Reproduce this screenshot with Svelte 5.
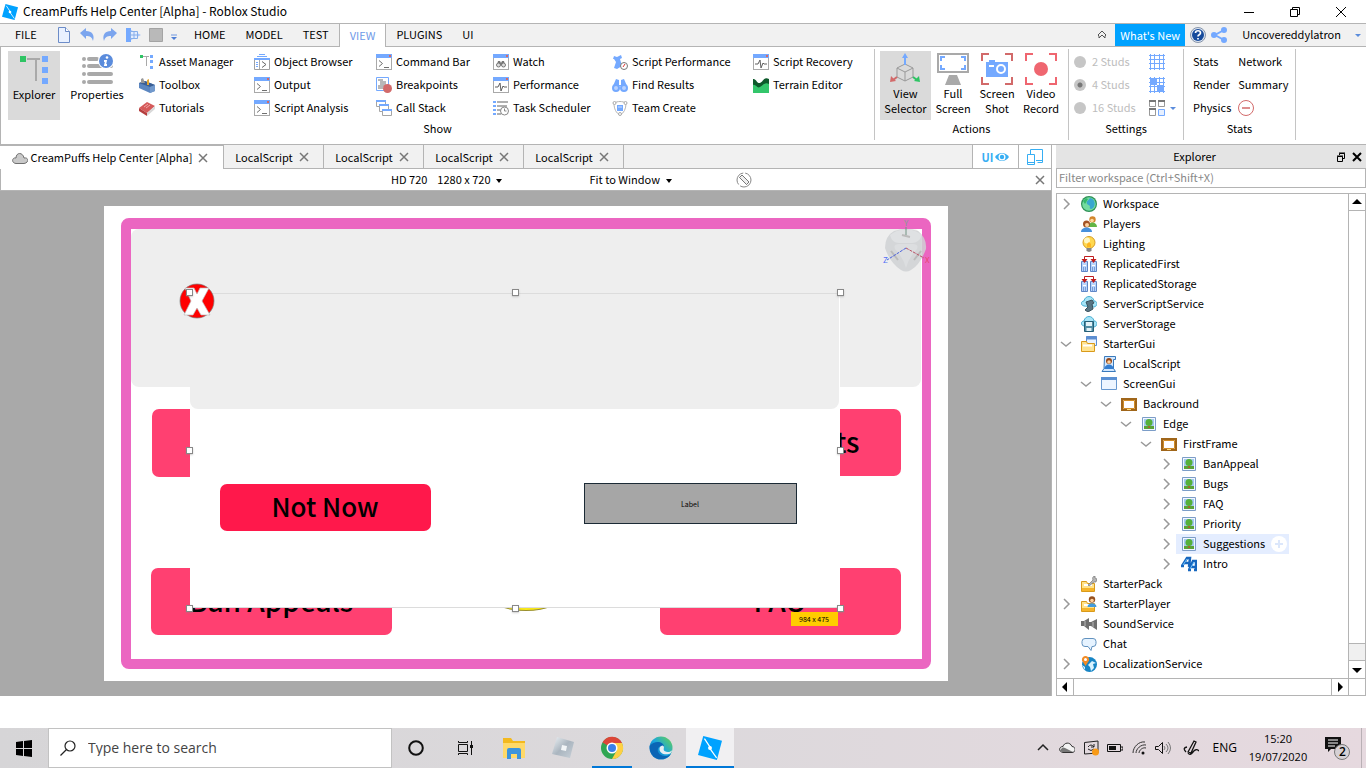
<script>
  const win = '<rect x=".5" y=".5" width="15" height="15" fill="#fff" stroke="#a9a9a9"/><path d="M0 0h16v4H0z" fill="#74a9ff"/><path d="M13 1h2v2h-2z" fill="#d26a6a"/>';
  const globe = '<circle cx="8" cy="8" r="8" fill="#2d8f55"/><circle cx="8" cy="8" r="6.800" fill="#74dca0"/>';
  const folder = '<path d="M.5 5.500h5l1 2h7v8H.5z" fill="#ffe28a" stroke="#d99a1b"/><path d="M1 12h12v3H1z" fill="#f6b52c"/><path d="M3 9h8" stroke="#fff" stroke-width="2"/>';
  const cloudDb = '<path d="M3 10C-1 9 0 5 3 5c1-6 9-6 10 0 4 0 4 5 0 6z" fill="#a6e4f7" stroke="#49aed2"/>';
  const server = '<path d="M.5 5.500h6v10h-6z" fill="#b9d4fb" stroke="#5f86c6"/><path d="M9.500 5.500h6v10h-6z" fill="#b9d4fb" stroke="#5f86c6"/><path d="M2 9.500h3M11 9.500h3" stroke="#fff"/><path d="M2 12h3M2 14h3M11 12h3M11 14h3" stroke="#3a6ab8" stroke-dasharray="1 1"/><path d="M3.500 4V.5h9V4" fill="none" stroke="#c01d1d"/><path d="M.5 3h6l-3 4zM9.500 3h6l-3 4z" fill="#c01d1d"/>';
  const frame = '<path d="M1 3h14v11H1z" fill="#fff" stroke="#a0661a" stroke-width="2"/><path d="M2.500 4.500h11v8h-11z" fill="none" stroke="#d18c25"/><path d="M6 13.500h4" stroke="#ffe07a"/>';
  const logo = '<path d="M3.500 0 16 3.200 12.600 16 0 12.700z" fill="#00a2ff"/><path d="m4.300 1.800 4.300 6.400M7.400 7.600l5 7" stroke="#fff" stroke-width=".8"/><circle cx="8" cy="8" r="1.300" fill="#fff"/>';

  const art = {
    logo,
    file: '<path d="M2.500.5h7l4 4v11h-11z" fill="#e9f1ff" stroke="#6c8cc8"/><path d="M9.500.5v4h4" fill="#fff" stroke="#6c8cc8"/>',
    undo: '<path d="M1 6 7 1v3c6 0 9 4 7 10-1-4-3-5-7-5v3z" fill="#7ba5ee"/>',
    redo: '<path d="M15 6 9 1v3C3 4 0 8 2 14c1-4 3-5 7-5v3z" fill="#7ba5ee"/>',
    play: '<path d="M1 1h5v14H1z" fill="#74a9ff"/><path d="M6 3 16 8 6 13z" fill="#a8c6fa"/><path d="M5.500 4.500h7v7h-7zM9 4.500v7M5.500 8h7" fill="#e2ecff" stroke="#86aeea"/>',
    stop: '<path d="M1.500 1.500h13v13h-13z" fill="#b9b9b9" stroke="#a4a4a4"/>',
    more: '<path d="M5 8h6" stroke="#7098e0"/><path d="M5 10h6l-3 3z" fill="#4f7fd6"/>',
    explorer: '<path d="M1 1h6v6H1zM23 1h6v6h-6zM23 12h6v6h-6zM23 23h6v6h-6z" fill="#74a9ff"/><path d="M1 1h6v6H1z" fill="#2ec464"/><path d="M8 4h13M17 4v22" stroke="#a9a9a9" stroke-width="2"/>',
    props: '<path d="M8 5h8M8 12h22M8 20h22M8 28h22" stroke="#a9a9a9" stroke-width="4" stroke-linecap="round"/><g fill="#a9a9a9"><circle cx="3" cy="5" r="2"/><circle cx="3" cy="12" r="2"/><circle cx="3" cy="20" r="2"/><circle cx="3" cy="28" r="2"/></g><circle cx="25" cy="7" r="8" fill="#fff"/><circle cx="25" cy="7" r="7" fill="#5b8cdc"/><circle cx="26" cy="3.500" r="1.300" fill="#fff"/><path d="M23 7h2l-1 4h2" fill="none" stroke="#fff" stroke-width="1.800"/>',
    asset: '<path d="M1 1h3v3H1z" fill="#2ec464"/><path d="M11 1h3v3h-3zM11 6h3v3h-3zM11 12h3v3h-3z" fill="#74a9ff"/><path d="M4 2.500h6M7.500 2v10" stroke="#a9a9a9"/>',
    toolbox: '<path d="m0 6 6-2 10 4v6l-5 2L0 11z" fill="#5b86c0"/><path d="m0 6 6-2 10 4-5 2z" fill="#3b5f94"/><path d="M2 6V2l2-1 2 5" fill="#999"/><path d="m8 3 2-1v6H8z" fill="#e6a831"/><path d="M11 10v6l5-2V8z" fill="#7299cc"/>',
    book: '<path d="m0 8 8-6 8 4-8 7z" fill="#d55a5a"/><path d="m0 8 8 5v3l-8-5z" fill="#b53e3e"/><path d="m8 13 8-7v3l-8 7z" fill="#d8d8d8"/><path d="m5 7 4-3M7 8l4-3" stroke="#f1a6a6"/>',
    browser: '<path d="M5 .5h6M3 2.500h10" stroke="#74a9ff"/><path d="M.5 5.500h15v10H.5z" fill="#fff" stroke="#a0a0a0"/><path d="M0 5h16" stroke="#74a9ff" stroke-width="2"/><path d="M2 8.500h2M2 10.500h2M2 12.500h2" stroke="#74a9ff"/><path d="M5.500 6v9" stroke="#aaa"/><path d="m8 7.500 4 3-4 3" fill="none" stroke="#666"/>',
    term: win + '<path d="m3 6.500 3.500 3L3 12.500M8 13.500h5" fill="none" stroke="#707070"/>',
    breakp: '<path d="M.5.5h12v13H.5z" fill="#fff" stroke="#74a9ff"/><path d="M2 3h5M4 5h6M4 7h6M2 9h7M2 11h5" stroke="#707070"/><circle cx="11.500" cy="11.500" r="4.500" fill="#d26a6a"/>',
    stack: '<path d="M.5.500h9v6h-9z" fill="#fff" stroke="#a5a5a5"/><path d="M0 1h10" stroke="#74a9ff" stroke-width="2"/><path d="M3.500 5.500h9v6h-9z" fill="#fff" stroke="#a5a5a5"/><path d="M3 5h10" stroke="#74a9ff" stroke-width="2"/><path d="M6.500 9.500h9v6h-9z" fill="#fff" stroke="#a5a5a5"/><path d="M6 10h10" stroke="#74a9ff" stroke-width="2"/>',
    watch: win + '<path d="m4 11 1-4h2l1 2 1-2h2l1 4" fill="#777"/><circle cx="5.500" cy="11" r="2" fill="#ddd" stroke="#777"/><circle cx="10.500" cy="11" r="2" fill="#ddd" stroke="#777"/>',
    perf: win + '<path d="M2 10h3l2-4 1 8 2-5 1 1h3" fill="none" stroke="#606060"/>',
    task: '<path d="M0 2h3M0 6h3M0 10h3M0 14h3" stroke="#74a9ff" stroke-width="2"/><path d="M4 2h11M4 6h10M4 10h5M4 14h4" stroke="#b0b0b0" stroke-width="2"/><circle cx="11.500" cy="11" r="4" fill="#fff" stroke="#888"/><path d="M11.500 8.500V11h2" fill="none" stroke="#888"/>',
    scriptperf: '<path d="m1 5 1-3 3 1 4-2 1 3-2 1 2 7-5 3-3-1 1-3 1-3-2-3z" fill="#74a9ff"/><circle cx="12" cy="12" r="3.500" fill="#fff" stroke="#777"/><path d="m11 13 2-3" stroke="#d33"/>',
    find: '<path d="M1 9 4 2l3 1v5h2V3l3-1 3 7z" fill="#74a9ff"/><circle cx="4" cy="11" r="3" fill="#b9d2ff" stroke="#74a9ff" stroke-width="2"/><circle cx="12" cy="11" r="3" fill="#b9d2ff" stroke="#74a9ff" stroke-width="2"/>',
    team: '<path d="M2 3c0 6 2 10 6 12 4-2 6-6 6-12-4-2-8-2-12 0z" fill="none" stroke="#b5b5b5"/><path d="M5 5h6v6H5z" fill="#74a9ff"/><path d="M6 7h4" stroke="#cfe0ff"/><g fill="#fff" stroke="#aaa"><circle cx="2.500" cy="3" r="1.500"/><circle cx="13.500" cy="3" r="1.500"/><circle cx="8" cy="14" r="1.500"/></g>',
    terrain: '<path d="M0 2c3-1 4 5 7 4s4-7 9-4v13H0z" fill="#0d5a2b"/><path d="M0 8c3-1 4 4 7 2s5-5 9-3v9H0z" fill="#33c66b"/>',
    view3d: '<path d="m15 11 8 4v9l-8 4-8-4v-9zM7 15l8 4 8-4M15 19v9" fill="#dadada" stroke="#999"/><path d="M15 12V4" stroke="#74a9ff" stroke-width="2"/><path d="m15 0 3 5h-6z" fill="#74a9ff"/><path d="m7 24-4 3" stroke="#d26a6a" stroke-width="2"/><path d="m0 29 1-6 5 5z" fill="#d26a6a"/><path d="m23 24 4 3" stroke="#2ec464" stroke-width="2"/><path d="m30 29-1-6-5 5z" fill="#2ec464"/>',
    screen: '<path d="M1 1h30v18H1z" fill="#fff" stroke="#a9a9a9" stroke-width="2"/><path d="M12 22h8l4 10H8z" fill="#a9a9a9"/><path d="M4 8V4h4M24 4h4v4M4 12v4h4M24 16h4v-4" fill="none" stroke="#74a9ff" stroke-width="2"/>',
    shot: '<path d="M1 8V1h7M24 1h7v7M1 24v7h7M24 31h7v-7" fill="none" stroke="#d26a6a" stroke-width="2"/><path d="M5 9h3V7h6v2h13v15H5z" fill="#74a9ff"/><circle cx="20" cy="16" r="4" fill="none" stroke="#fff" stroke-width="2"/><path d="M8 13h5" stroke="#fff" stroke-width="2"/>',
    record: '<path d="M1 8V1h7M24 1h7v7M1 24v7h7M24 31h7v-7" fill="none" stroke="#ef6670" stroke-width="2"/><circle cx="16" cy="16" r="7" fill="#ef6670"/>',
    grid: '<path d="M0 1.500h16M0 5.500h16M0 9.500h16M0 14.500h16M1.500 0v16M5.500 0v16M10.500 0v16M14.500 0v16" stroke="#74a9ff"/>',
    grid2: '<path d="M1 1h7v7H1zM8 8h7v7H8z" fill="#74a9ff"/><path d="M0 1.500h16M0 5.500h16M0 9.500h16M0 14.500h16M1.500 0v16M5.500 0v16M10.500 0v16M14.500 0v16" stroke="#74a9ff"/>',
    panes: '<path d="M.5 1.500h6v5h-6zM9.500 1.500h6v5h-6zM.5 9.500h6v6h-6z" fill="#fff" stroke="#999"/><path d="M0 1h7M9 1h7M0 9h7" stroke="#777" stroke-width="2"/><path d="M9.500 9.500h6v6h-6z" fill="#e7f0ff" stroke="#74a9ff"/>',
    minus: '<circle cx="8" cy="8" r="7.500" fill="#fff" stroke="#d26a6a"/><path d="M4 8h8" stroke="#d26a6a" stroke-width="1.500"/>',
    help: '<circle cx="8" cy="8" r="7.500" fill="#dce5f2" stroke="#8694aa"/><circle cx="8" cy="8" r="6" fill="#174b9c"/><path d="M5.500 6c0-3 5-3 5 0 0 2-2.500 1.500-2.500 3.500M8 11v1.500" fill="none" stroke="#fff" stroke-width="1.700"/>',
    share: '<path d="m13 3-9 5 9 5" fill="none" stroke="#74a9ff" stroke-width="2"/><g fill="#74a9ff"><circle cx="13" cy="3" r="3"/><circle cx="3" cy="8" r="3"/><circle cx="13" cy="13" r="3"/></g>',
    cloud: '<path d="M4 13.500C-1 13 0 7 4 8c0-6 7-6 8 0 5-1 5 5 0 5.500z" fill="#c9c9c9" stroke="#707070"/>',
    eye: '<path d="M0 8c4-6 12-6 16 0-4 6-12 6-16 0z" fill="#36aef3"/><circle cx="8" cy="8" r="4" fill="#fff"/><circle cx="8" cy="8" r="2.500" fill="#36aef3"/>',
    devices: '<path d="M3.500 5V.5h12v13h-5M.5 5.500h7v10h-7z" fill="none" stroke="#36aef3"/><path d="M9 11.500h6M1 13.500h6" stroke="#36aef3"/>',
    rotate: '<circle cx="8" cy="8" r="7" fill="#fff" stroke="#888" stroke-dasharray="15 2"/><path d="m3.500 5.500 2.500-2.500 7 7-2.500 2.500zM3.500 5.500l7 7" fill="#eee" stroke="#777"/>',
    world: globe + '<path d="M9 2c5 1 6 7 3 10-2 2-4 1-3-2L6 8c-1-3 1-3 3-6z" fill="#39a7cf"/><path d="m2 5 3-3 2 1-3 5z" fill="#35b86a"/>',
    players: '<circle cx="11.500" cy="3.500" r="3.200" fill="#d3862d"/><path d="M7 11c0-6 9-6 9 0z" fill="#62b545"/><circle cx="11" cy="4.500" r="1.800" fill="#ffd9a0"/><circle cx="5.500" cy="8" r="3.500" fill="#a25325"/><circle cx="6" cy="9" r="2" fill="#ffd2a0"/><path d="M0 16c0-6 11-6 11 0z" fill="#4690dc"/>',
    bulb: '<circle cx="8" cy="6.500" r="6" fill="#ffd84f" stroke="#d79d25"/><circle cx="6" cy="4.500" r="3" fill="#fff6c3"/><path d="M6 8 8 6l2 2v3H6z" fill="#ffb51f"/><path d="M5.500 12h5v3l-2.500 1-2.500-1z" fill="#858585"/>',
    replicated: server,
    sss: cloudDb + '<path d="m5 6 6-2 2 3-2 1 1 5-5 3-3-2 3-3z" fill="#587583" stroke="#39515d"/>',
    storage: cloudDb + '<path d="M3.500 5.500h9v10h-9z" fill="#508da4" stroke="#255f77"/><path d="M5 6h6v4H5zM5.500 12h5v3h-5z" fill="#e3f2f7"/>',
    startergui: '<path d="M5.500.5h10v9h-10z" fill="#eaf3ff" stroke="#5c8ed1"/><path d="M5 2h11" stroke="#5c8ed1" stroke-width="3"/><path d="M.5 5.500h5l1 2h7v8H.5z" fill="#ffe391" stroke="#d99a1b"/><path d="M2 9.500h9" stroke="#fff" stroke-width="2"/>',
    local: '<path d="M3.500.5h11v3h-2v9l2 3H1l2-3z" fill="#d1e7ff" stroke="#3979bb"/><circle cx="8" cy="5" r="3" fill="#944819"/><circle cx="8" cy="6" r="1.800" fill="#ffd2a0"/><path d="M3 13c1-6 9-6 10 0z" fill="#347ed0"/>',
    screengui: '<path d="M.5 1.500h15v12H.5z" fill="#edf5ff" stroke="#6898cf"/><path d="M0 2.500h16" stroke="#5a90d3" stroke-width="3"/>',
    frame,
    image: '<path d="M1.500 1.500h13v13h-13z" fill="#f2f8ff" stroke="#7c9dc8"/><path d="M3 3h10v10H3z" fill="#a5c9f0"/><path d="M3 10h10v3H3z" fill="#5ba338"/><circle cx="8" cy="6.500" r="3.500" fill="#55b03a"/><path d="M7 10h2v2H7z" fill="#a06a2c"/>',
    intro: '<path d="m1 10 5-8h3l-1 9M3 7h5M8 14l4-9h3v10M9 11h6M0 10h3M7 14h3M13 14h3" fill="none" stroke="#1767bf" stroke-width="2.500"/><path d="m2 9 4-6M9 13l4-7" stroke="#6cc3ff"/>',
    pack: folder + '<path d="m7 9 5-5c-1-2 0-4 2-4v2l2 1-1 3h-2L8 10z" fill="#b6b6b6" stroke="#777" stroke-width=".7"/>',
    player: folder + '<circle cx="11" cy="3.500" r="3.200" fill="#96501f"/><circle cx="11" cy="4.500" r="1.800" fill="#ffd2a0"/><path d="M6.500 11c0-5 9-5 9 0z" fill="#449bdc"/>',
    sound: '<path d="M0 5h3l5-3v12l-5-4H0zM8 6h2l6-3v11l-6-4H8z" fill="#707070"/><path d="M4 5v5M12 6v5" stroke="#bbb"/>',
    chat: '<path d="M4 2.500h8q3 0 3 3v2q0 3-3 3h-1l-1 4-3-4H4q-3 0-3-3v-2q0-3 3-3z" fill="#e6f3ff" stroke="#6292bf"/>',
    local2: '<circle cx="8.500" cy="8.500" r="7.500" fill="#1785c5"/><path d="m7 9 4-4 4 2-3 1 1 4-3 3-1-4zM1 9l3 2v3z" fill="#d9f3ff"/><path d="M4.500 10 1 4.500c-1-6 8-6 7 0z" fill="#f28b25"/><circle cx="4.500" cy="3.500" r="1.500" fill="#fff"/>',
    start: '<path d="m0 2 7-1v7H0zM8 1l8-1v8H8zM0 9h7v7l-7-1zM8 9h8v8l-8-1z" fill="#000"/>',
    search: '<circle cx="10" cy="6" r="5" fill="none" stroke="#222" stroke-width="1.200"/><path d="m6.500 9.500-6 6" stroke="#222" stroke-width="1.200"/>',
    cortana: '<circle cx="8" cy="8" r="6.800" fill="none" stroke="#111" stroke-width="2"/>',
    tasks: '<path d="M1.500 4.500h9v7h-9zM1.500 1v1.500h9V1M1.500 15v-1.500h9V15M14.500 1v14" fill="none" stroke="#111"/><path d="M13 5h3v3h-3z" fill="#111"/>',
    files: '<path d="M1 2h8l2 3h12v17H1z" fill="#f3b91e"/><path d="M1 7h22v15H1z" fill="#ffd968"/><path d="M5 14q0-2 2-2h10q2 0 2 2v9h-4v-5H9v5H5z" fill="#3d94dc"/>',
    roblox: '<defs><linearGradient id="silver" x2="1" y2="1"><stop stop-color="#eef3f6"/><stop offset=".5" stop-color="#aab5bf"/><stop offset="1" stop-color="#c7d0d8"/></linearGradient></defs><path d="m6 1 17 5-4 16-18-4z" fill="url(#silver)"/><path d="m11 9 5 1-1 5-5-1z" fill="#f2f5f7"/>',
    chrome: '<circle cx="12" cy="12" r="11" fill="#30a653"/><path d="M12 12 2.500 6.500A11 11 0 0 1 22 7H12z" fill="#dc4638"/><path d="M12 7h10a11 11 0 0 1-10 16l5-9z" fill="#ffd043"/><circle cx="12" cy="12" r="5.500" fill="#fff"/><circle cx="12" cy="12" r="4" fill="#3a80e8"/>',
    edge: '<defs><linearGradient id="sea" x1="0" y1="1" x2="1" y2="0"><stop stop-color="#095caf"/><stop offset=".5" stop-color="#1aa6df"/><stop offset="1" stop-color="#6bd447"/></linearGradient></defs><circle cx="12" cy="12" r="11.500" fill="url(#sea)"/><path d="M.7 10C5 4 15 5 15 11c-6-3-9 5-3 8 3 2 7 1 10-1-5 8-20 7-21.300-6z" fill="#0b65b5"/><path d="M13.500 9.500c3 1 0 4 2 5.500 3 2 6 1 8-1-1 2-2 4-4 4-5 1-9-1-9-5 0-2 1-3 3-3.500z" fill="#e6edf2"/>',
    tchev: '<path d="m3 10 5-5 5 5" fill="none" stroke="#222" stroke-width="1.500"/>',
    tcloud: '<path d="M4 12.500c-5-1-4-6 0-6 1-4 7-5 9 0 4 0 4 6 0 6z" fill="#f3f3f3" stroke="#333"/><path d="M1 11q2-5 5-3l8 4H3z" fill="#777"/>',
    sync: '<path d="M1.500 2.500 15 1v12L1.500 14z" fill="none" stroke="#222"/><path d="M5 7q3-4 6 0M11 4v3H8M11 9q-3 3-6 0" fill="none" stroke="#222"/><circle cx="12.500" cy="12" r="3.500" fill="#f89a16"/>',
    battery: '<path d="M.5 4.500h13v7H.5zM14 7h2v3h-2" fill="none" stroke="#111"/><path d="M2 6h7v4H2z" fill="#111"/>',
    wifi: '<path d="M2 13C2 7 8 1 14 2M5 13c0-4 5-9 10-8M8 13c0-3 4-6 7-5" fill="none" stroke="#333"/><circle cx="12" cy="13" r="1.500" fill="#111"/>',
    volume: '<path d="M.5 6.500h3l4-4v11l-4-4h-3z" fill="none" stroke="#111"/><path d="M9 6q2 2 0 4M11 4q4 4 0 8M13 2q5 6 0 12" fill="none" stroke="#777"/>',
    pen: '<path d="m5 12 6-11 2 1-5 11zM3 12q-4-4 1-5M5 13q2 3 5-1 3-4 6-1" fill="none" stroke="#111" stroke-width="1.300"/>',
    notice: '<path d="M0 0h16v12H6l-3 3v-3H0z" fill="#111"/><path d="M3 3h10M3 6h10M3 9h7" stroke="#fff"/><circle cx="17" cy="15" r="7.500" fill="#d6d1d5" stroke="#777"/>',
    right: '<path d="m6 3 5 5-5 5" fill="none" stroke="#999" stroke-width="1.500"/>',
    down: '<path d="m3 6 5 4 5-4" fill="none" stroke="#999" stroke-width="1.500"/>',
    close: '<path d="m4 4 8 8M12 4l-8 8" stroke="#777" stroke-width="1.500"/>',
    wmin: '<path d="M3 8.500h10" stroke="#000"/>',
    wmax: '<path d="M3.500 5.500h7v7h-7zM5.500 5V3.500h7v7H11" fill="none" stroke="#000"/>',
    wclose: '<path d="m3 3 10 10M13 3 3 13" stroke="#000"/>',
    dock: '<path d="M4.500 7.500h5v5h-5zM6.500 6V4.500h5v5H10M4 7h6M6 4h6" fill="none" stroke="#000"/>',
    pclose: '<path d="m4 4 8 8M12 4l-8 8" stroke="#000" stroke-width="2"/>',
    collapse: '<path d="m4 8 4-4 4 4-1 1v2l-3-3-3 3V9z" fill="none" stroke="#555"/>',
    aup: '<path d="M3 10h10L8 5z"/>',
    adown: '<path d="M3 6h10l-5 5z"/>',
    aleft: '<path d="M10 3v10L5 8z"/>',
    aright: '<path d="M6 3v10l5-5z"/>',
    tri: '<path d="M5 7h6l-3 4z"/>',
    tri2: '<path d="M5 7h6l-3 3z" fill="#5b8cdc"/>',
    plus: '<circle cx="8" cy="8" r="8" fill="#fff"/><path d="M8 4v8M4 8h8" stroke="#dce7fb" stroke-width="2"/>',
  };

  const tools = [
    [['asset', 'Asset Manager'], ['toolbox', 'Toolbox'], ['book', 'Tutorials']],
    [['browser', 'Object Browser'], ['term', 'Output'], ['term', 'Script Analysis']],
    [['term', 'Command Bar'], ['breakp', 'Breakpoints'], ['stack', 'Call Stack']],
    [['watch', 'Watch'], ['perf', 'Performance'], ['task', 'Task Scheduler']],
    [['scriptperf', 'Script Performance'], ['find', 'Find Results'], ['team', 'Team Create']],
    [['perf', 'Script Recovery'], ['terrain', 'Terrain Editor']],
  ];
  const actions = [['view3d', 'View', 'Selector'], ['screen', 'Full', 'Screen'], ['shot', 'Screen', 'Shot'], ['record', 'Video', 'Record']];
  const tree = [
    [0, 'right', 'world', 'Workspace'], [0, '', 'players', 'Players'], [0, '', 'bulb', 'Lighting'],
    [0, '', 'replicated', 'ReplicatedFirst'], [0, '', 'replicated', 'ReplicatedStorage'],
    [0, '', 'sss', 'ServerScriptService'], [0, '', 'storage', 'ServerStorage'], [0, 'down', 'startergui', 'StarterGui'],
    [1, '', 'local', 'LocalScript'], [1, 'down', 'screengui', 'ScreenGui'], [2, 'down', 'frame', 'Backround'],
    [3, 'down', 'image', 'Edge'], [4, 'down', 'frame', 'FirstFrame'], [5, 'right', 'image', 'BanAppeal'],
    [5, 'right', 'image', 'Bugs'], [5, 'right', 'image', 'FAQ'], [5, 'right', 'image', 'Priority'],
    [5, 'right', 'image', 'Suggestions'], [5, 'right', 'intro', 'Intro'], [0, '', 'pack', 'StarterPack'],
    [0, 'right', 'player', 'StarterPlayer'], [0, '', 'sound', 'SoundService'], [0, '', 'chat', 'Chat'],
    [0, 'right', 'local2', 'LocalizationService'],
  ];
  const studs = ['2 Studs', '4 Studs', '16 Studs'];
  const apps = [['cortana', 16], ['tasks', 16], ['files', 24], ['roblox', 24], ['chrome', 24], ['edge', 24], ['logo', 24]];
  const appNames = ['Cortana', 'Task View', 'File Explorer', 'Roblox', 'Chrome', 'Edge', 'Roblox Studio'];
  const tray = ['tchev', 'tcloud', 'sync', 'battery', 'wifi', 'volume'];
  const handles = ['top left', 'top mid', 'top right', 'center left', 'center right', 'bottom left', 'bottom mid', 'bottom right'];
  let filter = $state('');
  let query = $state('');
  let stud = $state('4 Studs');
</script>

{#snippet icon(name, size = 16, box = size)}
  <svg class="icon" width={size} height={size} viewBox="0 0 {box} {box}" aria-hidden="true">{@html art[name]}</svg>
{/snippet}

<div class="page">
  <header class="titlebar">
    {@render icon('logo')}
    <h1>CreamPuffs Help Center [Alpha] - Roblox Studio</h1>
    <div class="winbtns">
      <button aria-label="Minimize">{@render icon('wmin')}</button>
      <button aria-label="Restore">{@render icon('wmax')}</button>
      <button aria-label="Close">{@render icon('wclose')}</button>
    </div>
  </header>

  <nav class="menubar">
    <button class="filebtn">FILE</button>
    <div class="quick">
      {#each ['file', 'undo', 'redo', 'play', 'stop'] as q}
        <button aria-label={q}>{@render icon(q)}</button>
      {/each}
      <button class="narrow" aria-label="more">{@render icon('more')}</button>
    </div>
    <button class="menu">HOME</button>
    <button class="menu">MODEL</button>
    <button class="menu">TEST</button>
    <button class="menu current">VIEW</button>
    <button class="menu">PLUGINS</button>
    <button class="menu">UI</button>
    <div class="account">
      <button aria-label="Collapse ribbon">{@render icon('collapse')}</button>
      <button class="news">What's New</button>
      <button aria-label="Help">{@render icon('help')}</button>
      <button aria-label="Share">{@render icon('share')}</button>
      <button class="user"><span class="text">Uncovereddylatron</span>{@render icon('tri2')}</button>
    </div>
  </nav>

  <section class="ribbon">
    <div class="group show">
      <div class="body">
        <button class="big on">{@render icon('explorer', 30)}<span>Explorer</span></button>
        <button class="big wide">{@render icon('props', 32)}<span>Properties</span></button>
        <div class="tools">
          {#each tools as col}
            <div class="col">
              {#each col as [ic, label]}
                <button class="tool">{@render icon(ic)}<span class="text">{label}</span></button>
              {/each}
            </div>
          {/each}
        </div>
      </div>
      <div class="caption">Show</div>
    </div>
    <div class="group actions">
      <div class="body">
        {#each actions as [ic, a, b], i}
          <button class="big act" class:on={i === 0}>{@render icon(ic, 32)}<span>{a}<br />{b}</span></button>
        {/each}
      </div>
      <div class="caption">Actions</div>
    </div>
    <div class="group settings">
      <div class="body">
        <div class="col">
          {#each studs as s}
            <label class="tool stud"><input type="radio" name="studs" value={s} bind:group={stud} /><span class="text">{s}</span></label>
          {/each}
        </div>
        <div class="col">
          <button class="tool" aria-label="Show grid">{@render icon('grid')}</button>
          <button class="tool" aria-label="Grid material">{@render icon('grid2')}</button>
          <button class="tool tight" aria-label="Window layout">{@render icon('panes')}{@render icon('tri2')}</button>
        </div>
      </div>
      <div class="caption">Settings</div>
    </div>
    <div class="group stats">
      <div class="body">
        <div class="col">
          {#each ['Stats', 'Render', 'Physics'] as s}<button class="tool"><span class="text">{s}</span></button>{/each}
        </div>
        <div class="col">
          {#each ['Network', 'Summary'] as s}<button class="tool"><span class="text">{s}</span></button>{/each}
          <button class="tool" aria-label="Clear stats">{@render icon('minus')}</button>
        </div>
      </div>
      <div class="caption">Stats</div>
    </div>
  </section>

  <div class="work">
    <main class="editor">
      <div class="tabs">
        <div class="tab first">{@render icon('cloud')}<span class="text">CreamPuffs Help Center [Alpha]</span><button aria-label="Close tab">{@render icon('close')}</button></div>
        {#each [1, 2, 3, 4] as n}
          <div class="tab"><span>LocalScript</span><button aria-label="Close script {n}">{@render icon('close')}</button></div>
        {/each}
        <div class="tabtools">
          <button class="uib">UI {@render icon('eye', 14, 16)}</button>
          <button aria-label="Device emulator">{@render icon('devices')}</button>
        </div>
      </div>
      <div class="device">
        <span class="text">HD 720</span>
        <button><span class="text">1280 x 720</span>{@render icon('tri')}</button>
        <button class="fit"><span class="text">Fit to Window</span>{@render icon('tri')}</button>
        <button class="rot" aria-label="Rotate device">{@render icon('rotate')}</button>
        <button class="shut" aria-label="Close emulator">{@render icon('close')}</button>
      </div>
      <div class="viewport">
        <div class="stage">
          <div class="edge"></div>
          <div class="banner"></div>
          <div class="pink p1"></div>
          <div class="pink p2"><span>ts</span></div>
          <div class="pink p3">Ban Appeals</div>
          <div class="pink p4">FAQ</div>
          <div class="coin"></div>
          <div class="dialog">
            <div class="head"></div>
            <button class="notnow">Not Now</button>
            <div class="label">Label</div>
          </div>
          <svg class="redx" width="36" height="36" viewBox="0 0 36 36" aria-hidden="true"><circle cx="18" cy="18" r="17" fill="#f00" stroke="#777" stroke-width=".7"/><path d="M6 5h9l3 6 3-6h9l-7 13 8 14h-9l-4-7-4 7H5l7-14z" fill="#fff" stroke="#bbb" stroke-width=".7"/></svg>
          <div class="selection">
            {#each handles as h}<i class="handle {h}"></i>{/each}
            <span class="size">984 x 475</span>
          </div>
          <svg class="cube" width="50" height="54" viewBox="0 0 50 54" aria-hidden="true">
            <path d="M13 10Q25 6 37 10q9 7 8 18-6 16-15 21-5 3-10 0Q9 42 4 27q0-12 9-17z" fill="#cfd1d4" opacity=".85"/>
            <path d="M9 14q8-6 16-5 8-1 16 5-3 8-10 8H18q-7 0-9-8z" fill="#dfe1e3"/>
            <path d="M18 23h14q6 0 4 5-8 8-11 19-3-11-11-19-2-5 4-5z" fill="#dcdee0"/>
            <path d="m10 30 7 9M40 30l-7 9M21 14l8 2" stroke="#bbb" stroke-width="2"/>
            <path d="M25 6v8" stroke="#739483"/><path d="M25 27 6 39" stroke="#4b62dd" stroke-dasharray="3 1"/><path d="m25 27 18 10" stroke="#bb5266" stroke-dasharray="3 1"/>
            <text x="23" y="5" fill="#879b91">Y</text><text x="2" y="42" fill="#5270f5">Z</text><text x="44" y="42" fill="#e84770">X</text>
          </svg>
        </div>
      </div>
    </main>

    <aside class="explorer">
      <div class="phead"><h2 class="text">Explorer</h2><button aria-label="Undock">{@render icon('dock')}</button><button aria-label="Close panel">{@render icon('pclose')}</button></div>
      <input class="filter" aria-label="Filter workspace" placeholder="Filter workspace (Ctrl+Shift+X)" bind:value={filter} />
      <div class="treebox">
        <div class="treemain">
          <ul>
            {#each tree as [depth, arrow, ic, name]}
              <li style="padding-left: {depth * 20 + 1}px">
                <span class="chev">{#if arrow}{@render icon(arrow)}{/if}</span>
                <span class="node" class:hover={name === 'Suggestions'}>{@render icon(ic)}<span class="text">{name}</span>{#if name === 'Suggestions'}{@render icon('plus')}{/if}</span>
              </li>
            {/each}
          </ul>
          <div class="vbar">
            <button aria-label="Scroll up">{@render icon('aup')}</button>
            <span></span>
            <i></i>
            <button aria-label="Scroll down">{@render icon('adown')}</button>
          </div>
        </div>
        <div class="hbar">
          <button aria-label="Scroll left">{@render icon('aleft')}</button><span></span><button aria-label="Scroll right">{@render icon('aright')}</button><i></i>
        </div>
      </div>
    </aside>
  </div>

  <footer class="taskbar">
    <button class="start" aria-label="Start">{@render icon('start', 17)}</button>
    <label class="search">{@render icon('search')}<input aria-label="Search" placeholder="Type here to search" bind:value={query} /></label>
    <div class="apps">
      {#each apps as [ic, size], i}
        <button class:running={i === 4 || i === 6} class:active={i === 6} aria-label={appNames[i]}>{@render icon(ic, size, ic === 'logo' ? 16 : size)}</button>
      {/each}
    </div>
    <div class="tray">
      {#each tray as t}<span class="ti">{@render icon(t)}</span>{/each}
      <span class="ti pen">{@render icon('pen')}</span>
      <span class="lang">ENG</span>
      <span class="clock">15:20<br />19/07/2020</span>
      <button class="note" aria-label="Notifications">{@render icon('notice', 26)}<b>2</b></button>
    </div>
  </footer>
</div>

<style>
  :global(body) { margin: 0; background: #fff; }
  .page { min-height: 100vh; display: flex; flex-direction: column; font: 11px/16px "Noto Sans CJK SC", "Open Sans", sans-serif; color: #000; }
  .page * { box-sizing: border-box; }
  button { font: inherit; color: inherit; background: none; border: 0; padding: 0; margin: 0; display: flex; align-items: center; white-space: nowrap; }
  input { font: inherit; margin: 0; }
  .icon { flex: none; display: block; }
  .text { padding-bottom: 2px; }
  h1, h2 { margin: 0; font-size: inherit; font-weight: 400; }

  .titlebar { height: 23px; display: flex; align-items: center; padding-left: 2px; gap: 5px; font-size: 12px; }
  .titlebar h1 { padding-bottom: 2px; }
  .winbtns { margin-left: auto; margin-right: 2px; display: flex; }
  .winbtns button { width: 46px; justify-content: center; }

  .menubar { height: 24px; display: flex; background: #f1f1f1; border: 1px solid #b4b4b4; border-left: 0; border-right: 0; }
  .filebtn { padding: 0 0 2px 15px; width: 56px; }
  .quick { display: flex; gap: 7px; width: 128px; }
  .quick .narrow { margin-left: -5px; }
  .menu { padding: 0 10px 2px; }
  .current { background: #fff; color: #6f9ae8; border: 1px solid #b4b4b4; border-width: 0 1px; margin-bottom: -1px; }
  .account { margin-left: auto; display: flex; align-items: stretch; gap: 5px; }
  .news { background: #00a2ff; color: #fff; padding: 0 5px; }
  .user { margin-left: 10px; gap: 9px; }

  .ribbon { display: flex; height: 98px; padding: 2px 0 4px; border-bottom: 1px solid #b4b4b4; border-left: 1px solid #b4b4b4; }
  .group { border-right: 1px solid #c4c4c4; display: flex; flex-direction: column; }
  .body { display: flex; height: 71px; padding-top: 1px; }
  .caption { text-align: center; line-height: 16px; }
  .big { flex-direction: column; height: 69px; width: 52px; margin-top: 1px; padding-top: 2px; gap: 1px; line-height: 15px; text-align: center; }
  .on { background: #dadada; }
  .show { width: 874px; }
  .show .body { padding-left: 7px; }
  .show .big { gap: 2px; padding-top: 4px; }
  .show .wide { width: 74px; padding-top: 3px; gap: 1px; }
  .tools { display: grid; grid-template-columns: 115px 122px 117px 119px 141px 110px; padding-left: 5px; }
  .tool { display: flex; align-items: center; height: 23px; gap: 4px; white-space: nowrap; }
  .actions { width: 194px; }
  .actions .body { padding-left: 5px; }
  .act { width: 44px; }
  .act.on { width: 51px; }
  .settings { width: 115px; }
  .settings .body { padding: 1px 2px 0 5px; justify-content: space-between; }
  .stud { color: #bdbdbd; gap: 6px; }
  .stud input { appearance: none; width: 12px; height: 12px; border-radius: 50%; background: #c6c6c6; }
  .stud input:checked { background: radial-gradient(circle, #777 0 2px, #c6c6c6 3px); }
  .tight { gap: 0; }
  .stats { width: 112px; }
  .stats .body { padding-left: 9px; gap: 7px; }

  .work { flex: 1; display: flex; padding-bottom: 32px; }
  .editor { flex: 1; min-width: 0; display: flex; flex-direction: column; border-right: 1px solid #b4b4b4; }
  .tabs { height: 24px; display: flex; background: #f1f1f1; border-bottom: 1px solid #b4b4b4; }
  .tab { display: flex; align-items: center; justify-content: center; gap: 3px; width: 100px; border-right: 1px solid #b4b4b4; white-space: nowrap; }
  .first { width: 224px; background: #fff; border-top: 1px solid #b4b4b4; margin-bottom: -1px; }
  .tabtools { margin-left: auto; display: flex; background: #fff; border-left: 1px solid #b4b4b4; }
  .tabtools button { width: 32px; justify-content: center; }
  .tabtools .uib { width: 46px; gap: 2px; color: #36aef3; font-weight: 700; border-right: 1px solid #b4b4b4; }
  .device { height: 22px; display: flex; align-items: center; padding: 0 3px 0 390px; border-bottom: 1px solid #b4b4b4; border-left: 1px solid #b4b4b4; }
  .device button { margin-left: 10px; }
  .device .fit { margin-left: 83px; gap: 1px; }
  .device .rot { margin-left: 59px; }
  .device .shut { margin-left: auto; }
  .viewport { flex: 1; background: #a9a9a9; display: flex; align-items: center; justify-content: center; overflow: hidden; }

  .stage { position: relative; flex: none; width: 844px; height: 475px; background: #fff; overflow: hidden; }
  .stage > * { position: absolute; }
  .edge { left: 17px; top: 12px; right: 17px; bottom: 12px; border: 10px solid #eb66c1; border-radius: 8px; background: #fff; border-top-width: 11px; border-right-width: 9px; }
  .banner { left: 27px; top: 23px; width: 790px; height: 158px; background: #eee; border-radius: 8px; }
  .pink { background: #ff4071; border-radius: 7px; width: 241px; height: 67px; padding-bottom: 3px; display: flex; align-items: center; justify-content: center; font-size: 28px; font-weight: 500; }
  .p1 { left: 48px; top: 203px; height: 68px; }
  .p2 { left: 556px; top: 203px; justify-content: flex-end; padding-right: 41px; }
  .p3 { left: 47px; top: 362px; }
  .p4 { left: 556px; top: 362px; }
  .coin { left: 384px; top: 371px; width: 76px; height: 34px; background: #f8e71c; border: 1px solid #998f30; border-radius: 50%; }
  .dialog { left: 86px; top: 87px; width: 650px; height: 315px; background: #fff; border-top: 1px solid #dcdcdc; border-bottom: 1px solid #dcdcdc; }
  .dialog > * { position: absolute; }
  .head { left: 0; top: 0; width: 649px; height: 115px; background: #eee; border-radius: 0 0 8px 8px; }
  .notnow { left: 30px; top: 190px; width: 211px; height: 47px; padding-bottom: 3px; justify-content: center; background: #ff184b; border-radius: 7px; font-size: 26px; font-weight: 500; }
  .label { left: 394px; top: 189px; width: 213px; height: 41px; display: flex; align-items: center; justify-content: center; background: #a6a6a6; border: 1px solid #1b2a35; font-size: 7px; }
  .redx { left: 75px; top: 77px; }
  .selection { left: 86px; top: 87px; width: 650px; height: 315px; }
  .selection > * { position: absolute; }
  .handle { width: 7px; height: 7px; background: #fff; border: 1px solid #888; box-shadow: 0 1px 2px #8886; }
  .left { left: -4px; }
  .mid { left: 322px; }
  .right { right: -4px; }
  .top { top: -4px; }
  .center { top: 154px; }
  .bottom { bottom: -4px; }
  .size { left: 601px; top: 319px; width: 47px; height: 14px; background: #ffcc00; font-size: 7px; line-height: 14px; text-align: center; }
  .cube { left: 777px; top: 15px; overflow: visible; }
  .cube text { font-size: 8px; }

  .explorer { width: 314px; padding-left: 4px; display: flex; flex-direction: column; }
  .phead { height: 23px; display: flex; align-items: center; background: #e4e4e4; }
  .phead h2 { flex: 1; text-align: center; }
  .phead button:last-child { margin-right: 1px; }
  .filter { height: 20px; border: 1px solid #b4b4b4; padding: 0 2px 2px; }
  input::placeholder { color: #888; opacity: 1; }
  .treebox { flex: 1; margin-top: 5px; border: 1px solid #b4b4b4; display: flex; flex-direction: column; }
  .treemain { flex: 1; display: flex; }
  ul { flex: 1; margin: 0; padding: 0; list-style: none; }
  li { display: flex; height: 20px; align-items: center; }
  .chev { width: 18px; height: 16px; }
  .node { display: flex; align-items: center; gap: 6px; padding: 0 2px 0 5px; height: 20px; }
  .hover { background: #e4edff; }
  .vbar { width: 17px; border-left: 1px solid #b4b4b4; display: flex; flex-direction: column; }
  .vbar button { height: 17px; border-bottom: 1px solid #b4b4b4; }
  .vbar button:last-child { border-bottom: 0; }
  .vbar span, .hbar span { flex: 1; }
  .vbar i { height: 18px; background: #f0f0f0; border: 1px solid #b4b4b4; border-width: 1px 0; }
  .hbar { height: 17px; display: flex; border-top: 1px solid #b4b4b4; }
  .hbar button { width: 17px; border-right: 1px solid #b4b4b4; }
  .hbar span { border-right: 1px solid #b4b4b4; }
  .hbar i { width: 16px; }

  .taskbar { height: 40px; display: flex; background: linear-gradient(90deg, #d6d5d7, #dcd9dc 50%, #e6d9df); font-family: "Open Sans", sans-serif; }
  .start { width: 48px; justify-content: center; }
  .search { width: 344px; display: flex; align-items: center; gap: 12px; padding-left: 11px; background: #fff; border: 1px solid #c2c2c2; }
  .search input { flex: 1; min-width: 0; border: 0; padding: 0; outline: 0; font-size: 14px; }
  .search input::placeholder { color: #444; }
  .apps { display: flex; gap: 1px; }
  .apps button { width: 48px; justify-content: center; border-bottom: 2px solid transparent; border-top: 2px solid transparent; }
  .apps .running { border-bottom-color: #0078d7; margin: 0 4px; width: 40px; }
  .apps .active { background: #f1f0f2; border-top-color: #f1f0f2; margin: 0; width: 48px; }
  .tray { margin-left: auto; display: flex; align-items: center; margin-right: 4px; padding-right: 10px; border-right: 1px solid #b9b0b5; }
  .ti { width: 24px; display: flex; justify-content: center; }
  .pen { margin-left: 4px; }
  .lang { margin-left: 10px; font-size: 12px; }
  .clock { width: 60px; margin-left: 11px; text-align: center; line-height: 18px; font-size: 11px; }
  .note { position: relative; margin-left: 17px; padding-top: 4px; }
  .note b { position: absolute; left: 14px; top: 11px; font-size: 12px; font-weight: 600; }
</style>
